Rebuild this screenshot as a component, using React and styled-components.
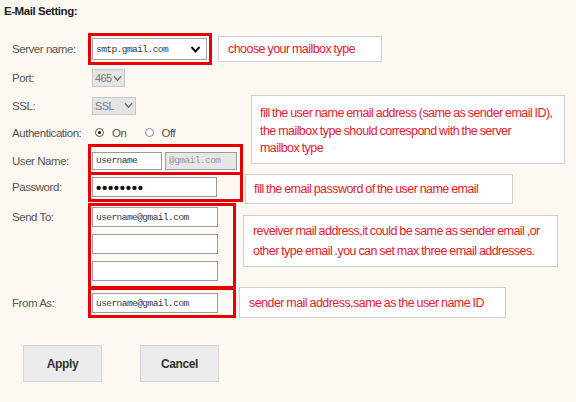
import React from "react";
import styled, { createGlobalStyle } from "styled-components";

const GlobalStyle = createGlobalStyle`
  html, body {
    margin: 0;
    padding: 0;
    background: #fdf8f1;
  }
  body {
    font-family: "Liberation Sans", Arial, sans-serif;
  }
`;

const Page = styled.div`
  position: relative;
  width: 576px;
  height: 402px;
  overflow: hidden;
  box-sizing: border-box;
  padding: 4px 0 0 4px;
`;

const Title = styled.h3`
  margin: 0;
  height: 31px;
  font-size: 11.5px;
  line-height: 14px;
  letter-spacing: -0.45px;
  font-weight: bold;
  color: #222;
`;

const Form = styled.div`
  display: flex;
  flex-direction: column;
  padding-left: 8px;
`;

const Row = styled.div`
  display: flex;
  align-items: ${(p) => (p.$top ? "flex-start" : "center")};
  height: ${(p) => (p.$height ? p.$height + "px" : "auto")};
  margin-top: ${(p) => p.$mt || 0}px;
`;

const Label = styled.div`
  width: 80px;
  flex-shrink: 0;
  margin-top: ${(p) => p.$mt || 0}px;
  font-size: 11.5px;
  letter-spacing: -0.45px;
  line-height: 20px;
  color: #555;
`;

const Stack = styled.div`
  display: flex;
  flex-direction: column;
  gap: 7px;
  padding-top: ${(p) => p.$pt || 0}px;
`;

const Inline = styled.div`
  display: flex;
  align-items: center;
  gap: 3px;
`;

const TextInput = styled.input`
  box-sizing: border-box;
  width: ${(p) => p.$w}px;
  height: ${(p) => p.$h || 20}px;
  margin: 0;
  padding: 0 3px;
  border: 1px solid #9c9c9c;
  border-radius: 0;
  background: ${(p) => (p.$muted ? "#e6e6e6" : "#fff")};
  color: ${(p) => (p.$muted ? "#9a9a9a" : "#3a3a3a")};
  font-family: "Liberation Mono", "DejaVu Sans Mono", monospace;
  font-size: 9.5px;
  letter-spacing: -0.55px;
  outline: none;
`;

const PasswordInput = styled(TextInput)`
  font-family: "Liberation Sans", Arial, sans-serif;
  font-size: 15px;
  font-weight: bold;
  letter-spacing: 0.7px;
  color: #111;
`;

const SelectBox = styled.div`
  box-sizing: border-box;
  display: flex;
  align-items: center;
  justify-content: space-between;
  width: ${(p) => p.$w}px;
  height: ${(p) => p.$h}px;
  padding: 0 ${(p) => (p.$small ? 2 : 5)}px 0 ${(p) => (p.$small ? 2 : 3)}px;
  border: 1px solid ${(p) => (p.$small ? "#c8c8c8" : "#a5a5a5")};
  background: ${(p) => (p.$small ? "#e4e4e4" : "#fff")};
  color: ${(p) => (p.$small ? "#7a7a7a" : "#3a3a3a")};
  font-family: ${(p) =>
    p.$small
      ? `"Liberation Sans", Arial, sans-serif`
      : `"Liberation Mono", "DejaVu Sans Mono", monospace`};
  font-size: ${(p) => (p.$small ? 11 : 9.5)}px;
  letter-spacing: ${(p) => (p.$small ? -0.6 : -0.55)}px;
`;

const RadioGroup = styled.div`
  display: flex;
  align-items: center;
  padding-left: 3px;
  gap: 19px;
`;

const RadioOption = styled.label`
  display: flex;
  align-items: center;
  gap: ${(p) => p.$gap}px;
  font-size: 11.5px;
  letter-spacing: -0.45px;
  color: #555;
`;

const RadioDot = styled.span`
  box-sizing: border-box;
  width: 9px;
  height: 9px;
  border-radius: 50%;
  border: 1px solid ${(p) => (p.$on ? "#555" : "#8a8a8a")};
  background: #fff;
  display: flex;
  align-items: center;
  justify-content: center;

  &::after {
    content: "";
    width: 3px;
    height: 3px;
    border-radius: 50%;
    background: ${(p) => (p.$on ? "#111" : "transparent")};
  }
`;

const ButtonBar = styled.div`
  display: flex;
  gap: 38px;
  padding-left: 19px;
  margin-top: 32px;
`;

const Button = styled.button`
  width: 79px;
  height: 37px;
  border: 1px solid #d6d6d6;
  border-radius: 0;
  background: #ececec;
  color: #333;
  font-family: "Liberation Sans", Arial, sans-serif;
  font-size: 12px;
  letter-spacing: -0.4px;
  font-weight: bold;
`;

const Highlight = styled.div`
  position: absolute;
  box-sizing: border-box;
  left: ${(p) => p.$x}px;
  top: ${(p) => p.$y}px;
  width: ${(p) => p.$w}px;
  height: ${(p) => p.$h}px;
  border: 3px solid #e60000;
  pointer-events: none;
`;

const Callout = styled.div`
  position: absolute;
  box-sizing: border-box;
  left: ${(p) => p.$x}px;
  top: ${(p) => p.$y}px;
  width: ${(p) => p.$w}px;
  height: ${(p) => p.$h}px;
  display: flex;
  flex-direction: column;
  justify-content: center;
  padding: ${(p) => p.$pt || 0}px 4px 0 ${(p) => p.$pl || 8}px;
  background: #fff;
  border: 1px solid #cfcfcf;
  color: #e8202c;
  font-family: "Liberation Sans", Arial, sans-serif;
  font-size: 12.5px;
  letter-spacing: -0.55px;
  word-spacing: -0.5px;
  line-height: ${(p) => p.$lh || 18}px;
  white-space: nowrap;
`;

const Chevron = ({ bold }) => (
  <svg width={bold ? 11 : 9} height="7" viewBox="0 0 10 7">
    <path
      d="M1 1 L5 5.5 L9 1"
      fill="none"
      stroke={bold ? "#111" : "#666"}
      strokeWidth={bold ? 2 : 1.4}
    />
  </svg>
);

const App = () => {
  return (
    <Page>
      <GlobalStyle />
      <Title>E-Mail Setting:</Title>
      <Form>
        <Row $height={28}>
          <Label>Server name:</Label>
          <SelectBox $w={115} $h={22}>
            <span>smtp.gmail.com</span>
            <Chevron bold />
          </SelectBox>
        </Row>
        <Row $height={30}>
          <Label>Port:</Label>
          <SelectBox $small $w={33} $h={18}>
            <span>465</span>
            <Chevron />
          </SelectBox>
        </Row>
        <Row $height={25}>
          <Label>SSL:</Label>
          <SelectBox $small $w={44} $h={18}>
            <span>SSL</span>
            <Chevron />
          </SelectBox>
        </Row>
        <Row $height={29}>
          <Label>Authentication:</Label>
          <RadioGroup>
            <RadioOption $gap={8}>
              <RadioDot $on />
              On
            </RadioOption>
            <RadioOption $gap={7}>
              <RadioDot />
              Off
            </RadioOption>
          </RadioGroup>
        </Row>
        <Row $height={27}>
          <Label>User Name:</Label>
          <Inline>
            <TextInput $w={70} $h={18} readOnly defaultValue="username" />
            <TextInput $w={72} $h={18} $muted readOnly defaultValue="@gmail.com" />
          </Inline>
        </Row>
        <Row $height={26}>
          <Label>Password:</Label>
          <PasswordInput type="password" $w={125} readOnly defaultValue="12345678" />
        </Row>
        <Row $top>
          <Label $mt={7}>Send To:</Label>
          <Stack $pt={7}>
            <TextInput $w={126} readOnly defaultValue="username@gmail.com" />
            <TextInput $w={126} readOnly defaultValue="" />
            <TextInput $w={126} readOnly defaultValue="" />
          </Stack>
        </Row>
        <Row $mt={12}>
          <Label>From As:</Label>
          <TextInput $w={126} readOnly defaultValue="username@gmail.com" />
        </Row>
      </Form>
      <ButtonBar>
        <Button>Apply</Button>
        <Button>Cancel</Button>
      </ButtonBar>

      <Highlight $x={88} $y={33} $w={124} $h={32} />
      <Highlight $x={88} $y={144} $w={155} $h={31} />
      <Highlight $x={88} $y={172} $w={155} $h={30} />
      <Highlight $x={88} $y={203} $w={148} $h={86} />
      <Highlight $x={88} $y={287} $w={148} $h={31} />

      <Callout $x={218} $y={36} $w={164} $h={26} $pl={9}>
        choose your mailbox type
      </Callout>
      <Callout $x={251} $y={95} $w={314} $h={69} $lh={17.5} $pt={4}>
        <span>fill the user name email address (same as sender email ID),</span>
        <span>the mailbox type should correspond with the server</span>
        <span>mailbox type</span>
      </Callout>
      <Callout $x={245} $y={174} $w={268} $h={30}>
        fill the email password of the user name email
      </Callout>
      <Callout $x={243} $y={215} $w={315} $h={52} $lh={20} $pl={9}>
        <span>reveiver mail address,it could be same as sender email ,or</span>
        <span>other type email .you can set max three email addresses.</span>
      </Callout>
      <Callout $x={239} $y={287} $w={267} $h={31} $pl={9}>
        sender mail address,same as the user name ID
      </Callout>
    </Page>
  );
};

export default App;
